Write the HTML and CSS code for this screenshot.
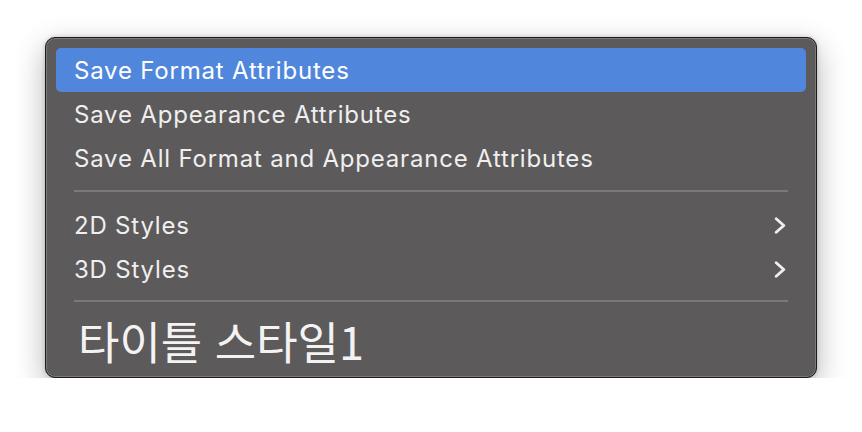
FILE: index.html
```html
<!DOCTYPE html>
<html lang="ko">
<head>
<meta charset="utf-8">
<title>Menu</title>
<link rel="stylesheet" href="styles.css">
</head>
<body>
<div class="menu">
  <div class="item active">Save Format Attributes</div>
  <div class="item">Save Appearance Attributes</div>
  <div class="item">Save All Format and Appearance Attributes</div>
  <div class="sep"></div>
  <div class="item sub">2D Styles
    <svg class="chev" viewBox="0 0 12 17" width="12" height="17"><path d="M2.2 1.8 L9.8 8.5 L2.2 15.2" fill="none" stroke="#efefef" stroke-width="2.8" stroke-linecap="round" stroke-linejoin="round"/></svg>
  </div>
  <div class="item sub">3D Styles
    <svg class="chev" viewBox="0 0 12 17" width="12" height="17"><path d="M2.2 1.8 L9.8 8.5 L2.2 15.2" fill="none" stroke="#efefef" stroke-width="2.8" stroke-linecap="round" stroke-linejoin="round"/></svg>
  </div>
  <div class="sep sep2"></div>
  <div class="title">타이틀 스타일1</div>
</div>
</body>
</html>
```
FILE: styles.css
```css
html, body {
  margin: 0;
  padding: 0;
  background: #ffffff;
}
body {
  padding: 37px 0 0 45px;
  font-family: Inter, "Noto Sans", "Noto Sans CJK KR", sans-serif;
}
.menu {
  box-sizing: border-box;
  width: 772px;
  height: 341px;
  background: #5d5a5b;
  border: 1px solid #1c1c1c;
  border-radius: 10px;
  box-shadow: inset 0 0 0 1px #7b797a, 0 10px 30px rgba(0, 0, 0, 0.3), 0 0 4px rgba(0,0,0,0.18);
  padding: 10px;
  display: flex;
  flex-direction: column;
  overflow: hidden;
}
.item {
  flex-shrink: 0;
  height: 44px;
  display: flex;
  align-items: center;
  padding-left: 18px;
  padding-right: 20px;
  border-radius: 5px;
  color: #efefef;
  font-size: 24px;
  letter-spacing: 0.8px;
}
.item.active {
  background: #5087dc;
  color: #ffffff;
}
.item.sub {
  justify-content: space-between;
}
.chev {
  display: block;
}
.sep {
  flex-shrink: 0;
  height: 2px;
  background: #7a7878;
  margin: 10px 18px 11px;
}
.sep2 {
  margin: 9px 18px 0;
}
.title {
  flex: 1;
  min-height: 0;
  display: flex;
  align-items: center;
  padding-left: 22px;
  padding-top: 12px;
  color: #f3f3f3;
  font-family: "Noto Sans CJK KR", sans-serif;
  font-size: 45px;
  line-height: 1;
}
```
